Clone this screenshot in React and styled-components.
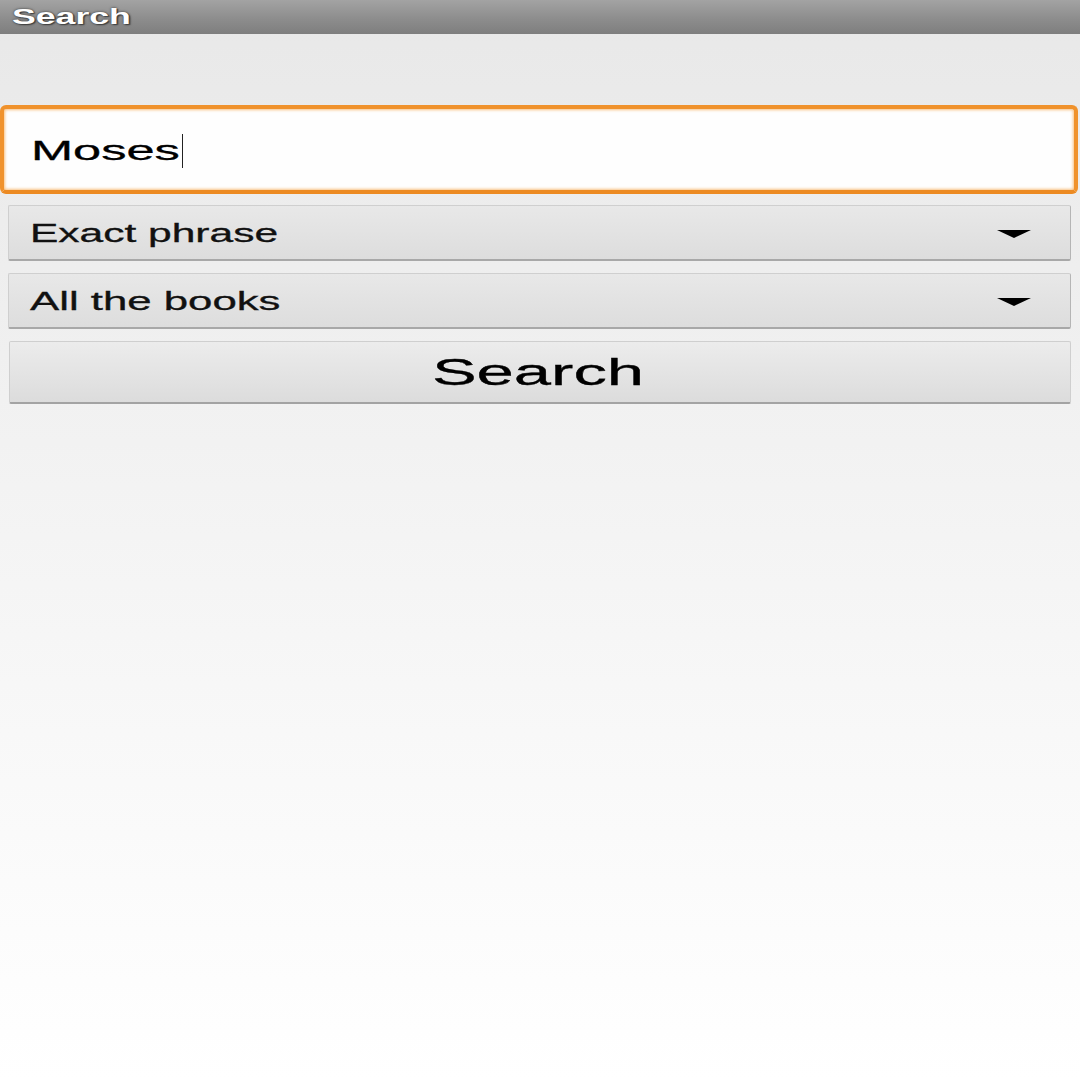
import React from "react";
import styled, { createGlobalStyle } from "styled-components";

const Global = createGlobalStyle`
  html, body { margin: 0; padding: 0; }
  body { font-family: "Liberation Sans", Arial, sans-serif; }
`;

const Screen = styled.div`
  width: 1080px;
  height: 1080px;
  display: flex;
  flex-direction: column;
  background: linear-gradient(to bottom, #e8e8e8 0%, #f3f3f3 45%, #ffffff 100%);
  overflow: hidden;
`;

const TitleBar = styled.div`
  height: 34px;
  flex: none;
  display: flex;
  align-items: center;
  padding-left: 12px;
  background: linear-gradient(to bottom, #a3a3a3 0%, #8d8d8d 55%, #7e7e7e 100%);
  box-sizing: border-box;
`;

const Stretch = styled.span`
  display: inline-block;
  white-space: nowrap;
  transform: scaleX(${(p) => p.$sx});
  transform-origin: ${(p) => (p.$center ? "center" : "left")} center;
  -webkit-text-stroke: 0.3px currentColor;
`;

const Title = styled(Stretch)`
  color: #fff;
  font-weight: bold;
  font-size: 22px;
  line-height: 1;
  -webkit-text-stroke: 0;
  text-shadow: 0 0 2px #333, 1px 1px 1px #444;
`;

const Content = styled.div`
  display: flex;
  flex-direction: column;
  padding: 71px 2px 0 0;
`;

const InputBox = styled.div`
  height: 89px;
  box-sizing: border-box;
  border: 4px solid #f0922c;
  border-bottom-color: #ec8a22;
  border-radius: 6px;
  background: #fefefe;
  box-shadow: inset 0 0 3px 1px #f8c080;
  display: flex;
  align-items: center;
  padding-left: 27px;
  padding-top: 4px;
`;

const InputRow = styled.div`
  display: flex;
  align-items: center;
`;

const InputText = styled(Stretch)`
  font-size: 27px;
  color: #000;
`;

const Caret = styled.span`
  display: inline-block;
  width: 1px;
  height: 34px;
  background: #222;
  margin-left: 71px;
  margin-top: -2px;
`;

const Controls = styled.div`
  display: flex;
  flex-direction: column;
  gap: 12px;
  margin: 11px 9px 0 8px;
`;

const Spinner = styled.div`
  height: 56px;
  box-sizing: border-box;
  border: 1px solid #cfcfcf;
  border-bottom: 2px solid #a8a8a8;
  border-right-color: #b5b5b5;
  border-radius: 2px;
  background: linear-gradient(to bottom, #e8e8e8 0%, #dddddd 100%);
  display: flex;
  align-items: center;
  justify-content: space-between;
  padding: 2px 39px 0 21px;
`;

const SpinnerText = styled(Stretch)`
  font-size: 25px;
  color: #111;
`;

const Arrow = styled.span`
  width: 0;
  height: 0;
  border-left: 17px solid transparent;
  border-right: 17px solid transparent;
  border-top: 8px solid #000;
`;

const Button = styled.div`
  height: 63px;
  margin-left: 1px;
  box-sizing: border-box;
  border: 1px solid #cfcfcf;
  border-bottom: 2px solid #a3a3a3;
  border-radius: 2px;
  background: linear-gradient(to bottom, #ececec 0%, #dcdcdc 100%);
  display: flex;
  align-items: center;
  justify-content: center;
`;

const ButtonText = styled(Stretch)`
  font-size: 36px;
  color: #000;
  margin-right: 4px;
  margin-top: 2px;
`;

export default function App() {
  return (
    <>
      <Global />
      <Screen>
        <TitleBar>
          <Title $sx={1.62}>Search</Title>
        </TitleBar>
        <Content>
          <InputBox>
            <InputRow>
              <InputText $sx={1.87}>Moses</InputText>
              <Caret />
            </InputRow>
          </InputBox>
        </Content>
        <Controls>
          <Spinner>
            <SpinnerText $sx={1.7}>Exact phrase</SpinnerText>
            <Arrow />
          </Spinner>
          <Spinner>
            <SpinnerText $sx={1.75}>All the books</SpinnerText>
            <Arrow />
          </Spinner>
          <Button>
            <ButtonText $sx={1.86} $center>Search</ButtonText>
          </Button>
        </Controls>
      </Screen>
    </>
  );
}
